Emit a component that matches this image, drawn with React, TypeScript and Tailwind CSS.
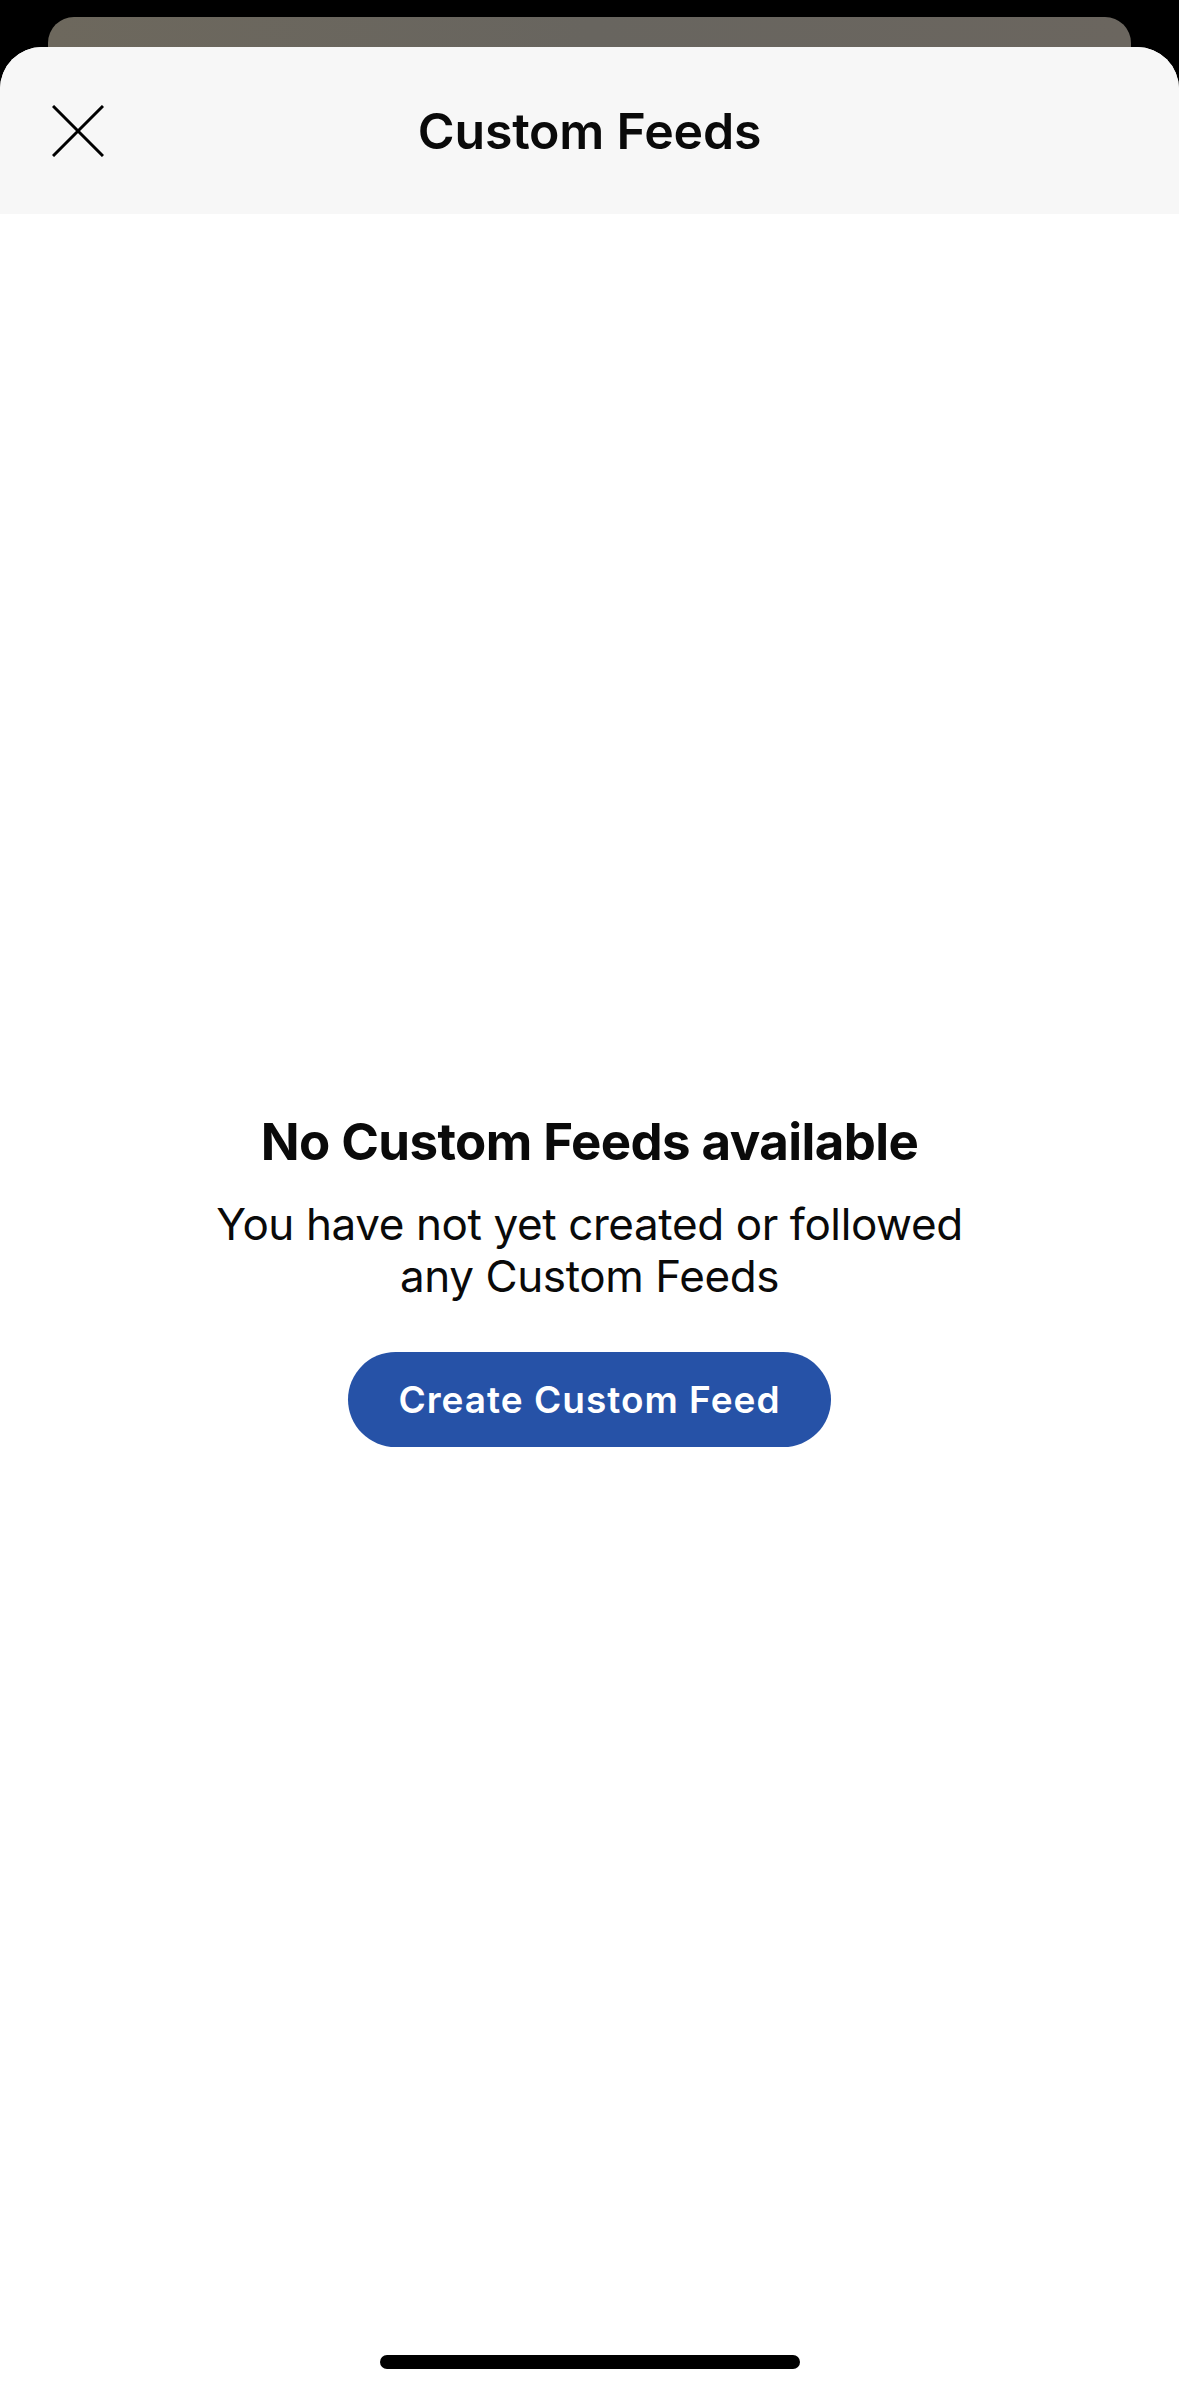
export default function App() {
  return (
    <div className="h-[2396px] w-full bg-black flex flex-col overflow-hidden font-['Inter',_'Noto_Sans',_sans-serif]">
      {/* card behind the sheet */}
      <div className="mt-[17px] mx-[48px] h-[60px] shrink-0 rounded-t-[26px] bg-gradient-to-r from-[#6d685d] via-[#68655f] to-[#6b665f]" />

      <div className="-mt-[30px] relative flex-1 flex flex-col rounded-t-[42px] bg-white overflow-hidden">
        <header className="h-[167px] shrink-0 bg-[#f7f7f7] grid grid-cols-[1fr_auto_1fr] items-center">
          <button className="justify-self-start ml-[52px] w-[52px] h-[52px] flex items-center justify-center text-black">
            <svg viewBox="0 0 52 52" className="w-[52px] h-[52px]" fill="none" stroke="currentColor" strokeWidth="3">
              <path d="M1 1L51 51M51 1L1 51" />
            </svg>
          </button>
          <h1 className="text-[50px] leading-[60px] font-semibold text-[#0a0a0a] tracking-[-0.2px]">Custom Feeds</h1>
          <div />
        </header>

        <div className="flex flex-col items-center pt-[898px] text-center">
          <h2 className="text-[51px] leading-[60px] font-bold text-[#0a0a0a] tracking-[-0.6px]">
            No Custom Feeds available
          </h2>
          <p className="mt-[26px] max-w-[800px] text-[44px] leading-[52px] text-[#0a0a0a] tracking-[-0.4px]">
            You have not yet created or followed any Custom Feeds
          </p>
          <button className="mt-[50px] h-[95px] px-[50px] rounded-full bg-[#2652a7] text-white text-[37px] font-semibold tracking-[1px]">
            Create Custom Feed
          </button>
        </div>

        <div className="mt-auto mb-[27px] self-center h-[14px] w-[420px] rounded-full bg-black" />
      </div>
    </div>
  );
}
